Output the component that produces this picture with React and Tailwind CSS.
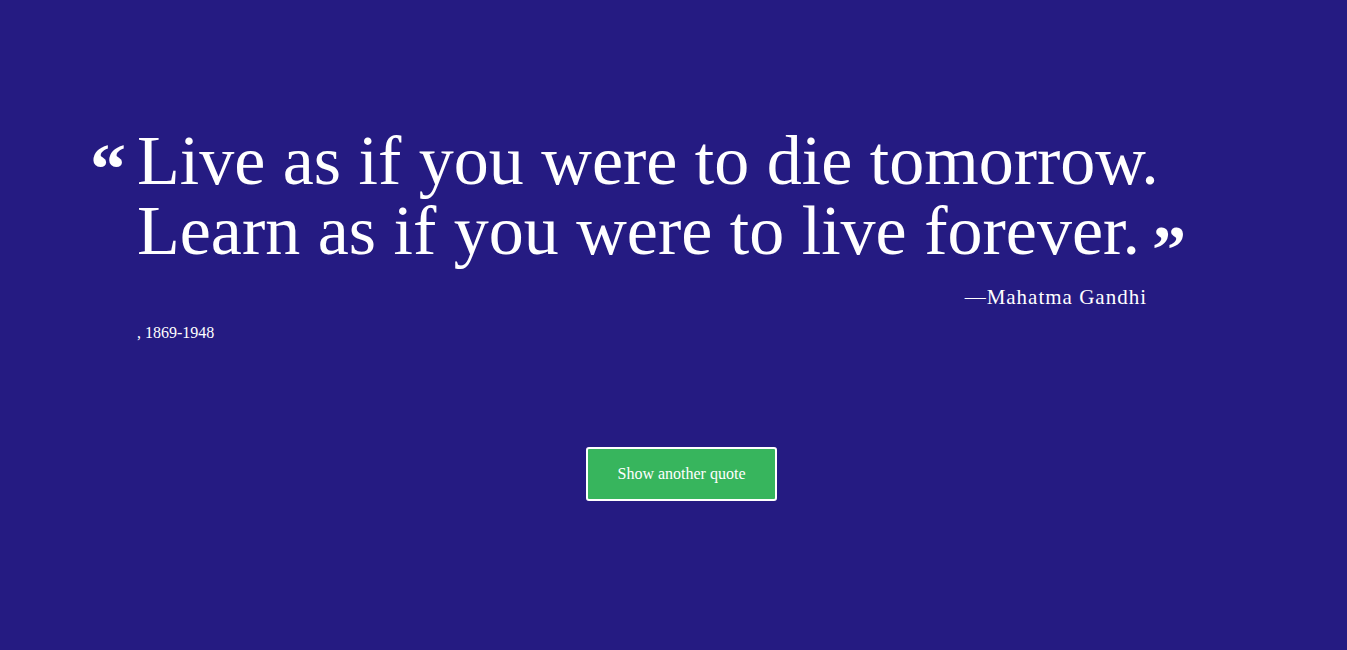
import React from 'react';

const App = () => {
  return (
    <div className="min-h-screen bg-[#251b82] text-white font-['Liberation_Serif',serif]">
      <div className="pt-[126px] pl-[90px]">
        <div className="flex">
          <span className="w-[47px] text-[72px] font-bold leading-[70px] pt-[8px]">“</span>
          <div className="w-[1010px]">
            <p className="text-[70px] leading-[70px] whitespace-nowrap">
              Live as if you were to die tomorrow.
              <br />
              Learn as if you were to live forever.
              <span className="relative top-[18px] ml-[12px] font-bold text-[68px] leading-[70px]">”</span>
            </p>
            <p className="text-right text-[21px] tracking-[1px] mt-[16px]">—Mahatma Gandhi</p>
            <p className="text-[16px] mt-[7px]">, 1869-1948</p>
          </div>
        </div>
      </div>
      <div className="flex justify-center pl-[16px] mt-[102px]">
        <button className="w-[191px] h-[54px] bg-[#37b55d] border-2 border-white rounded-[3px] text-[16px] text-white">
          Show another quote
        </button>
      </div>
    </div>
  );
};

export default App;
